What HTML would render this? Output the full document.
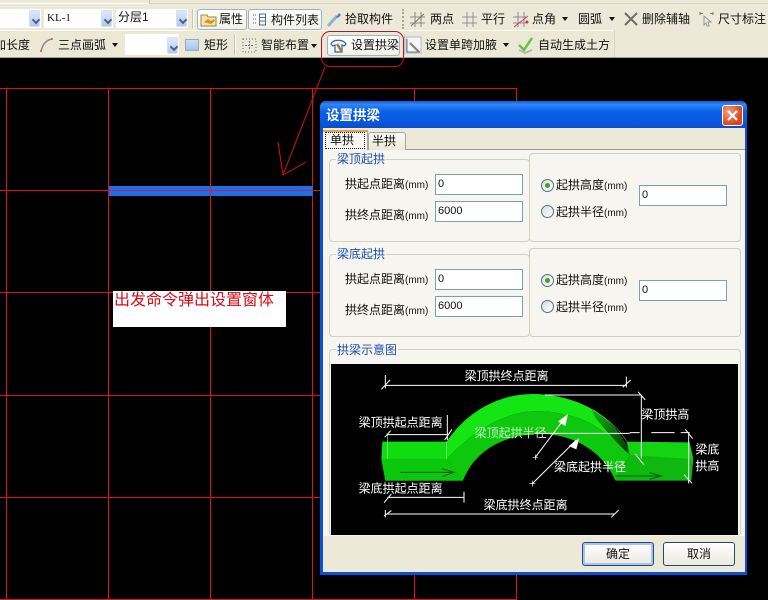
<!DOCTYPE html>
<html lang="zh"><head><meta charset="utf-8"><title>设置拱梁</title>
<style>
html,body{margin:0;padding:0;background:#000}
body{width:768px;height:600px;position:relative;overflow:hidden;font:12px/14px "Liberation Sans","WenQuanYi Zen Hei","Noto Sans CJK SC",sans-serif;color:#111}
div,span,svg{position:absolute;box-sizing:border-box}
.t{white-space:nowrap}
.t i{font-style:normal;font-size:10px}
.bar{background:#ece9d8}
.combo{background:#fff}
.ar{background:linear-gradient(#dfe9fb,#b4c8f0);border:1px solid #d4def5;border-radius:2px}
.ar:after{content:"";position:absolute;left:3px;top:6px;width:4px;height:4px;border:solid #4d6185;border-width:0 2px 2px 0;transform:rotate(45deg)}
.dd{width:0;height:0;border:3px solid transparent;border-top:4px solid #111;border-bottom:0}
.btn{background:linear-gradient(#fff,#f3f1e6);border:1px solid #9db3c9;border-radius:3px}
.sep{width:2px;background:#c8c5b2;border-right:1px solid #fff}
.in{background:#fff;border:1px solid #7f9db9;font-size:11px;line-height:19px;padding-left:2px;width:88px;height:21px}
.grp{border:1px solid #d0d0bf;border-radius:4px}
.leg{color:#1c4fb0;background:#f6f5ef;padding:0 1px;white-space:nowrap}
.rad{width:13px;height:13px;border-radius:50%;border:1px solid #4f6f90;background:linear-gradient(135deg,#dcdcd4,#fff)}
.rad.on:after{content:"";position:absolute;left:3px;top:3px;width:5px;height:5px;border-radius:50%;background:#3aa52e}
.dbtn{width:72px;height:24px;border-radius:3px;background:linear-gradient(#fff,#ece9df);text-align:center;line-height:22px;border:1px solid #1d4f68}
</style></head><body>

<svg style="left:0;top:0" width="768" height="600" viewBox="0 0 768 600">
<g stroke="#e0101e" stroke-width="1" fill="none" shape-rendering="crispEdges">
<path d="M0 88.500H517M0 190.500H517M0 292.500H517M0 395.500H517M0 497.500H517M0 599.500H517"/>
<path d="M6.500 88V600M108.500 88V600M210.500 88V600M312.500 88V600M414.500 88V600M516.500 88V600"/>
</g>
<rect x="109" y="186" width="204" height="10" fill="#1c6fe6"/>
<path d="M109 190.500H313M210.500 186V196" stroke="#c8203a" stroke-width="1"/>
<g stroke="#d8101e" stroke-width="1" fill="none"><path d="M325 67L283 175M278 142L283 175L306 162"/></g>
<rect x="113" y="291" width="173" height="36" fill="#fff"/>
<text x="114" y="305" font-size="16" fill="#d80c18" font-family="'Liberation Sans','WenQuanYi Zen Hei','Noto Sans CJK SC',sans-serif">出发命令弹出设置窗体</text>
</svg>

<!-- toolbars -->
<div class="bar" style="left:0;top:0;width:768px;height:30px;border-top:3px solid #ece9d8"></div>
<div style="left:0;top:3px;width:149px;height:1px;background:#fff"></div>
<div style="left:149px;top:0;width:1px;height:4px;background:#c8c5b2"></div>
<div style="left:150px;top:3px;width:618px;height:1px;background:#d8d5c2"></div>
<div class="bar" style="left:0;top:30px;width:614px;height:27px;background:#ebe8d6;border-top:1px solid #fbfaf4"></div>
<div class="bar" style="left:614px;top:30px;width:154px;height:27px;border-left:1px solid #d8d5c2"></div>
<div style="left:0;top:57px;width:768px;height:1px;background:#a5a28f"></div>

<div class="combo" style="left:0;top:9px;width:41px;height:19px"></div><div class="ar" style="left:29px;top:10px;width:11px;height:17px"></div>
<div class="combo" style="left:44px;top:9px;width:69px;height:19px"></div><div class="ar" style="left:101px;top:10px;width:11px;height:17px"></div>
<span class="t" style="left:47px;top:11px;font-family:'Liberation Serif',serif;font-size:11px">KL-1</span>
<div class="combo" style="left:116px;top:9px;width:72px;height:19px"></div><div class="ar" style="left:176px;top:10px;width:11px;height:17px"></div>
<span class="t" style="left:118px;top:10px">分层1</span>
<div class="sep" style="left:192px;top:9px;height:20px"></div>

<div class="btn" style="left:197px;top:9px;width:50px;height:21px"></div>
<svg style="left:200px;top:12px" width="17" height="15"><path d="M1 3h6l1 2h8v9H1z" fill="#f6e3a6" stroke="#9a8a5a"/><path d="M4 10l4-3 3 2 3-2 1 2-4 3z" fill="#d89020"/></svg>
<span class="t" style="left:219px;top:12px">属性</span>
<div class="btn" style="left:248px;top:9px;width:74px;height:21px"></div>
<svg style="left:251px;top:12px" width="16" height="15" fill="none" stroke="#50708f"><path d="M8.500 2h6v11h-6zM8.500 5.500h6M8.500 9h6" /><path d="M2 3h3M2 7h3M2 11h3" stroke-dasharray="1 1"/></svg>
<span class="t" style="left:271px;top:13px">构件列表</span>
<svg style="left:326px;top:11px" width="16" height="17"><path d="M2 15L11 5" stroke="#8fb2dc" stroke-width="3"/><path d="M10 6L13 2l2 2-3 3z" fill="#5a7fa8"/></svg>
<span class="t" style="left:345px;top:12px">拾取构件</span>
<div style="left:402px;top:9px;width:2px;height:20px;border-left:2px dotted #a8a594"></div>

<svg style="left:409px;top:10px" width="18" height="18" stroke="#8a8a80" fill="none"><path d="M1 7h15M1 13h15M6 2v15M12 2v15"/><path d="M2 16L15 4" stroke="#777"/></svg>
<span class="t" style="left:430px;top:12px">两点</span>
<svg style="left:461px;top:10px" width="18" height="18" stroke="#9c8f98" fill="none"><path d="M1 7h15M1 13h15M6 2v15M12 2v15"/></svg>
<span class="t" style="left:481px;top:12px">平行</span>
<svg style="left:512px;top:10px" width="18" height="18" stroke="#8a8a94" fill="none"><path d="M1 7h13M1 13h13M6 2v15M12 2v15"/><path d="M2 17L16 6" stroke="#d84050"/><circle cx="15" cy="12" r="1.500" fill="#d83040" stroke="none"/></svg>
<span class="t" style="left:532px;top:12px">点角</span>
<div class="dd" style="left:562px;top:17px"></div>
<span class="t" style="left:578px;top:12px">圆弧</span>
<div class="dd" style="left:609px;top:17px"></div>
<svg style="left:624px;top:11px" width="14" height="15"><path d="M1 2L13 14M13 2L1 14" stroke="#6a6a68" stroke-width="2"/></svg>
<span class="t" style="left:642px;top:12px">删除辅轴</span>
<svg style="left:699px;top:10px" width="16" height="18" fill="none" stroke="#777"><path d="M1 2v3M1 3.500h3M14 2v3M11 3.500h3" /><path d="M5 6l7 6-3 0 1 4-2 0-1-3-2 2z" fill="#e8e8e0" stroke="#999"/></svg>
<span class="t" style="left:718px;top:12px">尺寸标注</span>

<span class="t" style="left:-6px;top:38px">加长度</span>
<svg style="left:39px;top:37px" width="15" height="16" fill="none"><path d="M2 15C3 8 7 3 13 2" stroke="#8a8a8a" stroke-width="1.500"/><circle cx="13" cy="2" r="1" fill="#d06040"/><circle cx="2" cy="14" r="1" fill="#d06040"/></svg>
<span class="t" style="left:58px;top:38px">三点画弧</span>
<div class="dd" style="left:112px;top:43px"></div>
<div class="combo" style="left:125px;top:34px;width:54px;height:21px"></div><div class="ar" style="left:167px;top:37px;width:11px;height:17px"></div>
<div style="left:185px;top:39px;width:14px;height:12px;background:linear-gradient(#cfe0f6,#a9c4ea);border:1px solid #92a9cb"></div>
<span class="t" style="left:204px;top:38px">矩形</span>
<div class="sep" style="left:234px;top:34px;height:21px"></div>
<svg style="left:242px;top:38px" width="15" height="15" fill="none"><rect x="1" y="1" width="13" height="13" stroke="#667" stroke-dasharray="1 2"/><path d="M3 7.500h9M7.500 3v9" stroke="#5b7d9a" stroke-dasharray="2 1"/></svg>
<span class="t" style="left:261px;top:38px">智能布置</span>
<div class="dd" style="left:311px;top:44px"></div>

<div class="btn" style="left:327px;top:35px;width:73px;height:21px"></div>
<svg style="left:329px;top:37px" width="20" height="18" fill="none"><path d="M2 7C4 2 14 2 17 7l-2 2-2-1v7H6V8L4 9z" fill="#eef4fb" stroke="#2f6a8f" stroke-width="1.200"/><path d="M8 7l5 8" stroke="#a87832" stroke-width="2.500"/></svg>
<span class="t" style="left:351px;top:38px">设置拱梁</span>
<div style="left:321px;top:31px;width:83px;height:36px;border:1px solid #c01020;border-radius:9px"></div>

<div style="left:404px;top:34px;width:1px;height:21px;background:#c8c5b2"></div>
<svg style="left:405px;top:36px" width="17" height="18" fill="none"><rect x="1" y="1" width="15" height="16" fill="#f3f6fb" stroke="#aebccf"/><path d="M2 3v13h13" stroke="#5f7ea4"/><path d="M5 7l9 9" stroke="#9a7a50" stroke-width="2"/></svg>
<span class="t" style="left:425px;top:38px">设置单跨加腋</span>
<div class="dd" style="left:503px;top:43px"></div>
<svg style="left:517px;top:36px" width="17" height="18" fill="none"><path d="M2 9l5 5 8-12" stroke="#6fc04a" stroke-width="2.500"/><path d="M2 14l6 3 7-3" stroke="#a8b0a0" stroke-width="1.500"/></svg>
<span class="t" style="left:538px;top:38px">自动生成土方</span>

<!-- dialog -->
<div style="left:320px;top:101px;width:427px;height:474px;background:#0a50d8;border-radius:6px 6px 0 0"></div>
<div style="left:320px;top:101px;width:427px;height:27px;border-radius:6px 6px 0 0;background:linear-gradient(#0a5be0,#2f86f5 12%,#0a60e6 40%,#0855dc 85%,#0a4cc4)"></div>
<span class="t" style="left:326px;top:109px;color:#fff;font-weight:bold;font-size:13.500px">设置拱梁</span>
<div style="left:722px;top:105px;width:21px;height:21px;border-radius:3px;border:1px solid #fff;background:radial-gradient(circle at 30% 30%,#f0a080,#d8441c 70%)"></div>
<svg style="left:722px;top:105px" width="21" height="21"><path d="M6 6L15 15M15 6L6 15" stroke="#fff" stroke-width="2.200"/></svg>

<div style="left:323px;top:128px;width:422px;height:444px;background:#ece9d8"></div>
<div style="left:323px;top:149px;width:422px;height:387px;background:#f6f5ef;border-top:1px solid #9c9b91"></div>
<div style="left:368px;top:132px;width:38px;height:18px;background:linear-gradient(#fbfaf6,#ece9d8);border:1px solid #a9a89c;border-bottom:0;border-radius:3px 3px 0 0"></div>
<span class="t" style="left:372px;top:134px">半拱</span>
<div style="left:323px;top:130px;width:45px;height:20px;background:#f8f7f2;border-top:2px solid #e8a040;border-right:1px solid #a9a89c"></div>
<div style="left:325px;top:132px;width:40px;height:17px;border:1px dotted #222"></div>
<span class="t" style="left:330px;top:133px">单拱</span>

<!-- group 1 -->
<div class="grp" style="left:329px;top:159px;width:201px;height:83px"></div>
<span class="leg" style="left:336px;top:152px">梁顶起拱</span>
<div class="grp" style="left:529px;top:153px;width:212px;height:89px;background:#f6f5ef"></div>
<span class="t" style="left:345px;top:177px">拱起点距离<i>(mm)</i></span>
<span class="t" style="left:345px;top:208px">拱终点距离<i>(mm)</i></span>
<div class="in" style="left:435px;top:174px">0</div>
<div class="in" style="left:435px;top:201px">6000</div>
<div class="rad on" style="left:541px;top:179px"></div>
<div class="rad" style="left:541px;top:205px"></div>
<span class="t" style="left:556px;top:178px">起拱高度<i>(mm)</i></span>
<span class="t" style="left:556px;top:205px">起拱半径<i>(mm)</i></span>
<div class="in" style="left:639px;top:185px">0</div>

<!-- group 2 -->
<div class="grp" style="left:329px;top:254px;width:201px;height:83px"></div>
<span class="leg" style="left:336px;top:247px">梁底起拱</span>
<div class="grp" style="left:529px;top:248px;width:212px;height:89px;background:#f6f5ef"></div>
<span class="t" style="left:345px;top:272px">拱起点距离<i>(mm)</i></span>
<span class="t" style="left:345px;top:303px">拱终点距离<i>(mm)</i></span>
<div class="in" style="left:435px;top:269px">0</div>
<div class="in" style="left:435px;top:296px">6000</div>
<div class="rad on" style="left:541px;top:274px"></div>
<div class="rad" style="left:541px;top:300px"></div>
<span class="t" style="left:556px;top:273px">起拱高度<i>(mm)</i></span>
<span class="t" style="left:556px;top:300px">起拱半径<i>(mm)</i></span>
<div class="in" style="left:639px;top:280px">0</div>

<!-- group 3 -->
<div class="grp" style="left:329px;top:349px;width:412px;height:187px;border-bottom:0"></div>
<span class="leg" style="left:336px;top:343px">拱梁示意图</span>

<!-- diagram, coordinates in 3x units from (328,360) -->
<svg style="left:331px;top:364px" width="407" height="171" viewBox="9 12 1221 513" font-family="'Liberation Sans','WenQuanYi Zen Hei','Noto Sans CJK SC',sans-serif">
<defs><linearGradient id="w" x1="0.100" y1="0" x2="0.800" y2="1"><stop offset="0" stop-color="#0cb40c"/><stop offset="1" stop-color="#053c05"/></linearGradient></defs>
<rect x="0" y="0" width="1260" height="560" fill="#000"/>
<!-- left flat -->
<path d="M163 245H356V297L405 362H172L160 296Z" fill="#10dc10"/>
<path d="M160 296L356 297L405 362H172Z" fill="#0cc80c"/>
<!-- right flat -->
<path d="M896 245L1085 247L1096 297H906Z" fill="#12d412"/>
<path d="M906 285L1096 297L1090 362H862Z" fill="#0eb80e"/>
<!-- arch top band -->
<path d="M356 245C420 150 520 100 620 102C690 104 750 122 796 150C850 185 880 215 906 285C840 220 780 175 716 165C680 155 640 152 600 155C500 168 420 230 356 297Z" fill="#14e614"/>
<!-- arch middle band -->
<path d="M356 297C420 230 500 168 600 155C640 152 680 155 716 165C780 175 840 220 906 285L862 362C830 280 740 222 640 222C530 222 440 270 405 362Z" fill="#0ec80e"/>
<!-- dark wedge -->
<path d="M790 145C850 180 885 225 906 285C860 245 815 190 800 170Z" fill="url(#w)"/>
<path d="M796 150C850 185 880 215 896 245" stroke="#9ff09f" stroke-width="1.500" fill="none"/>
<path d="M356 245V297M179 225V297" stroke="#8ef08e" stroke-width="2" fill="none"/>
<path d="M218 337H378M342 326L378 337L342 350" stroke="#0a4a0a" stroke-width="2.500" fill="none"/>
<path d="M862 348H1000M965 338L1000 348L965 358" stroke="#0a4a0a" stroke-width="2.500" fill="none"/>
<g stroke="#fff" fill="none" stroke-width="3">
<path d="M172 76H895M172 45V85M160 88L186 60M895 50V82M884 82L908 60"/>
<path d="M650 105H940M940 105V295M930 95L952 120M922 282L948 315"/>
<path d="M178 224H358M358 165V240M170 232L188 212M350 240L372 208"/>
<path d="M620 220H905M970 218H1040M905 218H935M1058 218H1085" />
<path d="M1082 218V370M1072 208L1094 236M1068 344L1092 370"/>
<path d="M178 412H408M408 395V428M168 428L190 402"/>
<path d="M178 462H860M172 450V472M850 472L872 450M168 468L190 452"/>
<path d="M622 292L712 172M612 372L745 240"/>
<path d="M614 292h16M622 284v16M604 371h18M613 362v18" stroke-width="2"/>
</g>
<path d="M720 162L690 185L712 198Z" fill="#fff"/>
<path d="M754 234L722 258L745 268Z" fill="#fff"/>
<g fill="#fff" font-size="36">
<text x="410" y="60">梁顶拱终点距离</text>
<text x="92" y="199">梁顶拱起点距离</text>
<text x="440" y="231" fill="#c4f8c4">梁顶起拱半径</text>
<text x="940" y="176">梁顶拱高</text>
<text x="1102" y="280">梁底</text>
<text x="1102" y="330">拱高</text>
<text x="678" y="333">梁底起拱半径</text>
<text x="92" y="397">梁底拱起点距离</text>
<text x="467" y="447">梁底拱终点距离</text>
</g>
</svg>

<div class="dbtn" style="left:582px;top:542px;border:1px solid #1f4a86;box-shadow:inset 0 0 0 2px #a9c4ec">确定</div>
<div class="dbtn" style="left:663px;top:542px">取消</div>
</body></html>
